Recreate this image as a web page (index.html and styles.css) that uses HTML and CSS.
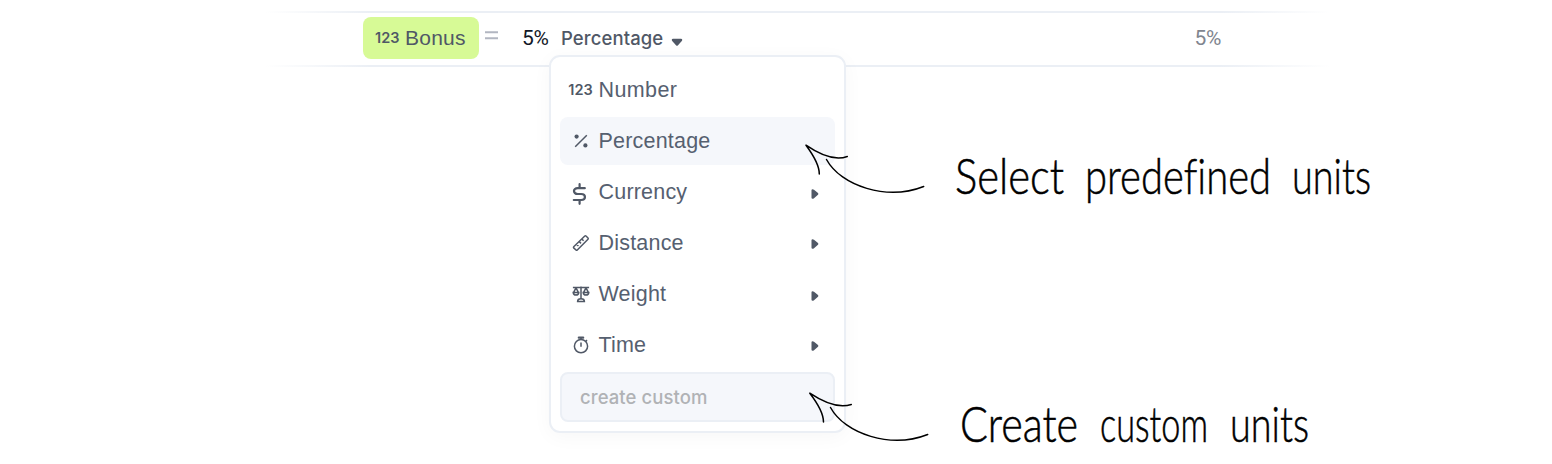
FILE: index.html
```html
<!DOCTYPE html>
<html lang="en">
<head>
<meta charset="utf-8">
<title>Units</title>
<link rel="stylesheet" href="styles.css">
</head>
<body>
<main class="stage">
  <section class="formula">
    <div class="chip"><span class="digits">123</span><span class="chip-name">Bonus</span></div>
    <svg class="equals" width="13" height="9" viewBox="0 0 13 9"><path d="M0 1.2H13M0 7.2H13"/></svg>
    <span class="value">5%</span>
    <span class="unit">Percentage</span>
    <svg class="caret" width="12" height="9" viewBox="0 0 12 9"><path d="M2 .7H10Q12 1.2 10.8 3L7 7.3Q6 8.4 5 7.3L1.2 3Q0 1.2 2 .7Z"/></svg>
    <span class="result">5%</span>
  </section>

  <div class="menu">
    <div class="item"><span class="icon digits">123</span><span class="label number">Number</span></div>
    <div class="item active">
      <span class="icon"><svg width="18" height="18" viewBox="0 0 18 18"><path class="line" d="M3.2 14.8L14.8 3.2"/><circle cx="4.6" cy="4.6" r="2.1"/><circle cx="13.4" cy="13.4" r="2.1"/></svg></span>
      <span class="label">Percentage</span>
    </div>
    <div class="item">
      <span class="icon dollar"><svg width="18" height="22" viewBox="0 0 18 22"><path class="bold" d="M13.8 5.2H6.7C1.7 5.2 1.7 11 6.7 11H10.2C15.2 11 15.2 17 10.2 17H2.8M8.6 1.2V5M8.6 17V20.8"/></svg></span>
      <span class="label">Currency</span><svg class="arrow" width="8" height="10" viewBox="0 0 8 10"><path d="M.5 1.3Q.5 .2 1.6 .2Q2.3 .2 3 .8L7 4.1Q7.8 5 7 5.8L3 9.2Q2.3 9.8 1.6 9.8Q.5 9.8 .5 8.7Z"/></svg>
    </div>
    <div class="item">
      <span class="icon"><svg width="18" height="18" viewBox="0 0 18 18"><path class="line" d="M1.7 12.8L12.8 2Q13.4 1.5 14 2L16 4Q16.6 4.7 16 5.3L5.3 16Q4.6 16.6 4 16L1.7 13.9Q1.2 13.3 1.7 12.8ZM4.8 10.4L6.4 12M7.4 7.8L9 9.4M10 5.2L11.6 6.8"/></svg></span>
      <span class="label">Distance</span><svg class="arrow high" width="8" height="10" viewBox="0 0 8 10"><path d="M.5 1.3Q.5 .2 1.6 .2Q2.3 .2 3 .8L7 4.1Q7.8 5 7 5.8L3 9.2Q2.3 9.8 1.6 9.8Q.5 9.8 .5 8.7Z"/></svg>
    </div>
    <div class="item">
      <span class="icon"><svg width="18" height="18" viewBox="0 0 18 18"><path class="line" d="M.9 2.6H17.1M9 1.4V14M4 2.9L1.6 7.4M4 2.9L6.4 7.4M14 2.9L11.6 7.4M14 2.9L16.4 7.4M1.2 7.4H6.8Q6.6 10.1 4 10.1T1.2 7.4ZM11.2 7.4H16.8Q16.6 10.1 14 10.1T11.2 7.4Z"/><path class="line" d="M5.6 16.4Q5.6 13.8 9 13.8T12.4 16.4Z"/></svg></span>
      <span class="label">Weight</span><svg class="arrow" width="8" height="10" viewBox="0 0 8 10"><path d="M.5 1.3Q.5 .2 1.6 .2Q2.3 .2 3 .8L7 4.1Q7.8 5 7 5.8L3 9.2Q2.3 9.8 1.6 9.8Q.5 9.8 .5 8.7Z"/></svg>
    </div>
    <div class="item">
      <span class="icon"><svg width="18" height="18" viewBox="0 0 18 18"><circle class="line" cx="9" cy="10.2" r="6.6"/><path class="line" d="M9 6.6V10.8M9 1.5V3.8M13.7 5.4L15 4.1"/><path class="bold" d="M6.8 1.7H11.2"/></svg></span>
      <span class="label">Time</span><svg class="arrow high" width="8" height="10" viewBox="0 0 8 10"><path d="M.5 1.3Q.5 .2 1.6 .2Q2.3 .2 3 .8L7 4.1Q7.8 5 7 5.8L3 9.2Q2.3 9.8 1.6 9.8Q.5 9.8 .5 8.7Z"/></svg>
    </div>
    <div class="custom">create custom</div>
  </div>

  <!-- Hand-drawn callouts over the menu -->
  <svg class="notes" width="1552" height="464" viewBox="0 0 1552 464">
    <g class="stroke">
      <path d="M819.3 174Q819.5 163.5 806 145.2Q831 162.5 847.3 156.5"/>
      <path d="M826.5 159.5C841 186 887 201 923.7 186.5"/>
      <path d="M823.5 422Q823.5 411 809.8 393.2Q835 410 851.3 404.5"/>
      <path d="M830.5 407.5C845 434 891 449 927.7 434.5"/>
    </g>
    <g class="hand">
      <text transform="translate(955 194) scale(1 1.38)" textLength="109" lengthAdjust="spacingAndGlyphs">Select</text>
      <text transform="translate(1085 194) scale(1 1.38)" textLength="186" lengthAdjust="spacingAndGlyphs">predefined</text>
      <text transform="translate(1292 194) scale(1 1.38)" textLength="79" lengthAdjust="spacingAndGlyphs">units</text>
      <text transform="translate(960 442) scale(1 1.38)" textLength="118" lengthAdjust="spacingAndGlyphs">Create</text>
      <text transform="translate(1100 442) scale(1 1.38)" textLength="108" lengthAdjust="spacingAndGlyphs">custom</text>
      <text transform="translate(1230 442) scale(1 1.38)" textLength="79" lengthAdjust="spacingAndGlyphs">units</text>
    </g>
  </svg>
</main>
</body>
</html>
```
FILE: styles.css
```css
* { box-sizing: border-box; }
body { margin: 0; background: #fff; font-family: Inter, "Liberation Sans", sans-serif; color: #505866; }
.stage { position: relative; width: 1552px; height: 464px; overflow: hidden; padding-top: 11px; }
.formula {
  display: flex; align-items: center; height: 56px; padding: 0 331px 2px 363px;
  background:
    linear-gradient(90deg, transparent 265px, #ebeff5 370px, #ebeff5 1220px, transparent 1330px) top / 100% 2px no-repeat,
    linear-gradient(90deg, transparent 265px, #ebeff5 370px, #ebeff5 1220px, transparent 1330px) bottom / 100% 2px no-repeat;
}
.chip { display: flex; align-items: center; width: 116px; height: 42px; padding-left: 12px; border-radius: 8px; background: #d7fa96; flex: none; }
.digits { font-size: 14.5px; font-weight: 600; line-height: 24px; }
.chip .digits { width: 30px; }
.chip-name { font-family: "Liberation Sans", sans-serif; font-size: 21px; letter-spacing: .25px; }
.equals { margin: -5px 0 0 6px; fill: none; stroke: #b2b6c1; stroke-width: 2; }
.value, .result { font-family: Roboto, sans-serif; font-size: 21px; letter-spacing: -.3px; }
.value { width: 38px; margin-left: 24px; color: #111827; }
.unit { width: 103px; font-size: 18.5px; font-weight: 500; letter-spacing: .1px; margin-left: 1px; margin-right: -1px; }
.caret { margin: 8px 0 0 8px; fill: #505866; }
.result { margin-left: auto; color: #80858f; }
.menu {
  position: absolute; left: 549px; top: 55px; width: 297px; height: 378px; padding: 9px;
  border: 2px solid #ebeff5; border-radius: 11px; background: #fff;
  box-shadow: 0 4px 20px rgba(0, 0, 0, .035);
}
.item { display: flex; align-items: center; height: 48px; margin-bottom: 3px; padding: 0 16px 0 8px; border-radius: 8px; }
.active { background: #f5f7fb; }
.icon { display: flex; align-items: center; justify-content: center; width: 25px; margin-right: 5.5px; flex: none; }
.icon svg { fill: #505866; overflow: visible; }
.icon .line { fill: none; stroke: #505866; stroke-width: 1.5; }
.icon .bold { fill: none; stroke: #505866; stroke-width: 2.2; stroke-linecap: round; }
.icon.dollar { padding-right: 2px; padding-top: 3px; }
.label { font-family: "Liberation Sans", sans-serif; font-size: 21.5px; line-height: 28px; letter-spacing: .2px; color: #566070; }
.label.number { letter-spacing: .4px; }
.arrow { margin: 4px 0 0 auto; fill: #505866; }
.arrow.high { margin-top: 2px; }
.custom { height: 50px; padding-left: 18px; border: 2px solid #ebeff5; border-radius: 8px; background: #f5f7fb; color: #b0b2b5; font-size: 18.5px; font-weight: 500; line-height: 46px; letter-spacing: .08px; }
.notes { position: absolute; left: 0; top: 0; pointer-events: none; }
.stroke { fill: none; stroke: #000; stroke-width: 1.5; stroke-linecap: round; stroke-linejoin: round; }
.hand { font-family: Lato, sans-serif; font-weight: 300; font-size: 36px; font-variant-ligatures: none; fill: #000; stroke: #000; stroke-width: .4; }
```
